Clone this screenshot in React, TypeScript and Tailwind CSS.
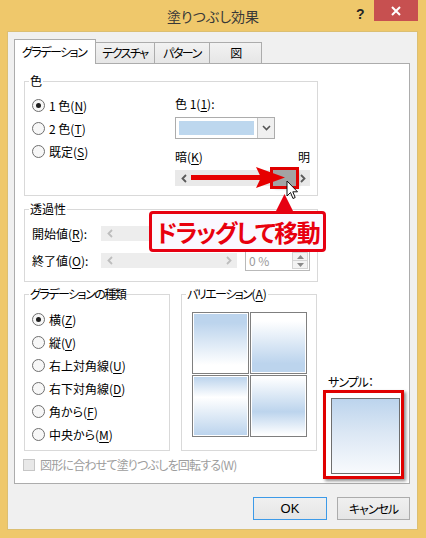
import type { ReactNode } from "react";

const Key = ({ k }: { k: string }) => (
	<>
		(<u className="underline-offset-2">{k}</u>)
	</>
);

function Radio({ checked, children }: { checked?: boolean; children: ReactNode }) {
	return (
		<div className="flex h-[23px] items-center gap-[4px]">
			<span className="flex h-[13px] w-[13px] items-center justify-center rounded-full border border-[#6f6f6f] bg-[#f7f7f7]">
				{checked ? <span className="h-[5px] w-[5px] rounded-full bg-[#1f1f1f]" /> : null}
			</span>
			<span>{children}</span>
		</div>
	);
}

function Group({ title, className, children }: { title: ReactNode; className: string; children: ReactNode }) {
	return (
		<fieldset className={`border border-[#d9d9d9] ${className}`}>
			<legend className="ml-[4px] px-[1px]">{title}</legend>
			{children}
		</fieldset>
	);
}

function Chev({ dir, color }: { dir: "left" | "right"; color: string }) {
	return (
		<svg width="6" height="9" viewBox="0 0 6 9">
			<path
				d={dir === "left" ? "M5 1 L1.5 4.5 L5 8" : "M1 1 L4.5 4.5 L1 8"}
				fill="none"
				stroke={color}
				strokeWidth="1.8"
			/>
		</svg>
	);
}

function Spin() {
	return (
		<div className="ml-[8px] flex h-[21px] w-[65px] border border-[#b9b9b9] bg-white">
			<span className="flex-1 pl-[3px] leading-[19px] text-[#9a9a9a]">0 %</span>
			<div className="my-[1px] mr-[1px] flex w-[16px] flex-col border border-[#d4d4d4] bg-[#f3f3f3]">
				<div className="flex flex-1 items-center justify-center border-b border-[#d4d4d4]">
					<svg width="7" height="4" viewBox="0 0 7 4">
						<path d="M0 4 L3.5 0 L7 4 Z" fill="#8a8a8a" />
					</svg>
				</div>
				<div className="flex flex-1 items-center justify-center">
					<svg width="7" height="4" viewBox="0 0 7 4">
						<path d="M0 0 L3.5 4 L7 0 Z" fill="#8a8a8a" />
					</svg>
				</div>
			</div>
		</div>
	);
}

const tiles = [
	"bg-[linear-gradient(to_bottom,#bcd4ed_15%,#ffffff_88%)]",
	"bg-[linear-gradient(to_bottom,#ffffff_12%,#bcd4ed_85%)]",
	"bg-[linear-gradient(to_bottom,#bcd4ed_0%,#ffffff_35%,#bcd4ed_100%)]",
	"bg-[linear-gradient(to_bottom,#ffffff_0%,#bcd4ed_60%,#ffffff_100%)]",
];

const types = [
	{ label: "横", k: "Z", checked: true },
	{ label: "縦", k: "V" },
	{ label: "右上対角線", k: "U" },
	{ label: "右下対角線", k: "D" },
	{ label: "角から", k: "F" },
	{ label: "中央から", k: "M" },
];

const tab =
	"-ml-px flex h-[21px] items-center justify-center border border-b-0 border-[#acacac] bg-[linear-gradient(to_bottom,#f2f2f2,#e6e6e6)] tracking-[-1.5px]";

export default function App() {
	return (
		<div className="relative flex h-[538px] w-[426px] flex-col overflow-hidden whitespace-nowrap bg-[#efc86b] text-[12px] leading-[16px] text-black [font-family:'Noto_Sans_CJK_JP',sans-serif] [font-feature-settings:'palt']">
			{/* title bar */}
			<div className="relative flex h-[31px] shrink-0 items-center justify-center">
				<span className="text-[14px] text-[#383838]">塗りつぶし効果</span>
				<span className="absolute left-[356px] top-[6px] text-[14px] font-bold leading-[16px] text-[#262626] [font-family:'Liberation_Sans',sans-serif]">
					?
				</span>
				<div className="absolute left-[374px] top-0 flex h-[21px] w-[44px] items-center justify-center bg-[#c75050]">
					<svg width="10" height="10" viewBox="0 0 10 10">
						<path d="M1 1 L9 9 M9 1 L1 9" stroke="#fff" strokeWidth="2" />
					</svg>
				</div>
			</div>

			{/* client */}
			<div className="mb-[8px] ml-[7px] mr-[8px] flex flex-1 flex-col border border-[#dcbf72] bg-[#f0f0f0] pl-[6px] pr-[7px] pt-[7px]">
				<div className="relative z-10 flex h-[24px] items-end">
					<div className="-mb-px flex h-[25px] w-[82px] items-center border border-b-0 border-[#acacac] bg-white pl-[7px] tracking-[-1.5px]">
						グラデーション
					</div>
					<div className={`${tab} w-[60px]`}>テクスチャ</div>
					<div className={`${tab} w-[56px]`}>パターン</div>
					<div className={`${tab} w-[53px]`}>図</div>
				</div>

				<div className="flex h-[421px] border border-[#acacac] bg-white pl-[9px] pt-[9px]">
					<div className="flex w-[294px] flex-col">
						<Group title="色" className="h-[123px]">
							<div className="flex">
								<div className="w-[150px] pl-[7px] pt-[5px]">
									<Radio checked>
										1 色<Key k="N" />
									</Radio>
									<Radio>
										2 色<Key k="T" />
									</Radio>
									<Radio>
										既定<Key k="S" />
									</Radio>
								</div>
								<div className="pt-[7px]">
									<div>
										色 1<Key k="1" />:
									</div>
									<div className="mt-[5px] flex h-[22px] w-[100px] border border-[#acacac] bg-white">
										<div className="m-[3px] w-[76px] bg-[#bdd7ee]" />
										<div className="ml-auto flex w-[17px] items-center justify-center border-l border-[#c4c4c4] bg-[#f0f0f0]">
											<svg width="9" height="6" viewBox="0 0 9 6">
												<path d="M1 1 L4.5 4.5 L8 1" fill="none" stroke="#555" strokeWidth="1.6" />
											</svg>
										</div>
									</div>
									<div className="mt-[10px] flex w-[135px] justify-between">
										<span>
											暗<Key k="K" />
										</span>
										<span>明</span>
									</div>
									<div className="relative mt-[5px] flex h-[16px] w-[135px] items-center justify-between bg-[#e9e9e9] pl-[6px] pr-[4px]">
										<Chev dir="left" color="#5a5a5a" />
										<Chev dir="right" color="#5a5a5a" />
										<div className="absolute left-[98px] top-0 h-[16px] w-[23px] bg-[#a3a3a3] shadow-[2px_2px_3px_rgba(0,0,0,0.45)] ring-[3px] ring-[#e00000]" />
									</div>
								</div>
							</div>
						</Group>

						<Group title="透過性" className="mt-[5px] h-[81px]">
							<div className="flex flex-col gap-[6px] pl-[7px] pt-[6px]">
								<div className="flex h-[21px] items-center">
									<span className="w-[69px]">
										開始値<Key k="R" />:
									</span>
									<div className="flex h-[15px] w-[136px] items-center justify-between bg-[#ededed] pl-[6px] pr-[5px]">
										<Chev dir="left" color="#bdbdbd" />
										<Chev dir="right" color="#bdbdbd" />
									</div>
									<Spin />
								</div>
								<div className="flex h-[21px] items-center">
									<span className="w-[69px]">
										終了値<Key k="O" />:
									</span>
									<div className="flex h-[15px] w-[136px] items-center justify-between bg-[#ededed] pl-[6px] pr-[5px]">
										<Chev dir="left" color="#bdbdbd" />
										<Chev dir="right" color="#bdbdbd" />
									</div>
									<Spin />
								</div>
							</div>
						</Group>

						<div className="mt-[4px] flex gap-[11px]">
							<Group
								title={<span className="tracking-[-1.5px]">グラデーションの種類</span>}
								className="h-[165px] w-[146px]"
							>
								<div className="pl-[7px] pt-[6px]">
									{types.map((t) => (
										<Radio key={t.k} checked={t.checked}>
											{t.label}
											<Key k={t.k} />
										</Radio>
									))}
								</div>
							</Group>
							<Group
								title={
									<>
										<span className="tracking-[-1.5px]">バリエーション</span>
										<Key k="A" />
									</>
								}
								className="h-[165px] w-[136px]"
							>
								<div className="grid w-max grid-cols-[57px_57px] gap-[1px] pl-[10px] pt-[10px]">
									{tiles.map((bg) => (
										<div key={bg} className="h-[62px] border border-[#7f7f7f] bg-white p-[1px]">
											<div className={`h-full w-full ${bg}`} />
										</div>
									))}
								</div>
							</Group>
						</div>

						<div className="-ml-px mt-[8px] flex h-[12px] items-center gap-[5px] text-[#9d9d9d]">
							<span className="h-[12px] w-[12px] border border-[#c6c6c6] bg-[#e8e8e8]" />
							<span className="tracking-[-0.8px]">図形に合わせて塗りつぶしを回転する(W)</span>
						</div>
					</div>

					<div className="ml-[5px] flex flex-col justify-end pb-[4px]">
						<div className="pl-[5px] tracking-[-1px]">サンプル：</div>
						<div className="h-[89px] w-[81px] border-[3px] border-[#e00000] bg-white pl-[5px] pt-[5px] shadow-[2px_2px_3px_rgba(0,0,0,0.45)]">
							<div className="h-[76px] w-[69px] border border-[#6e6e6e] bg-[linear-gradient(to_bottom,#bcd4ed_0%,#dbe7f4_45%,#f8fafd_100%)]" />
						</div>
					</div>
				</div>

				<div className="mt-[13px] flex justify-end gap-[10px]">
					<button className="h-[23px] w-[74px] border border-[#3d9ae8] bg-[linear-gradient(to_bottom,#f0f0f0,#e5e5e5)] text-[13px] [font-family:'Liberation_Sans',sans-serif]">
						OK
					</button>
					<button className="h-[23px] w-[73px] border border-[#acacac] bg-[linear-gradient(to_bottom,#f0f0f0,#e5e5e5)] tracking-[-1px]">
						キャンセル
					</button>
				</div>
			</div>

			{/* annotation overlays */}
			<svg className="absolute left-[189px] top-[166px]" width="98" height="24" viewBox="0 0 98 24">
				<rect x="2" y="9" width="70" height="5" fill="#e60000" />
				<path d="M67 1 L96 11.5 L67 22 L72 11.5 Z" fill="#e60000" />
			</svg>
			<svg className="absolute left-[286px] top-[180px]" width="13" height="21" viewBox="0 0 13 21">
				<path
					d="M1 1 L1 16 L4.5 12.5 L7 18.5 L9.2 17.5 L6.8 11.8 L11.5 11.8 Z"
					fill="#fff"
					stroke="#111"
					strokeWidth="1"
					strokeLinejoin="round"
				/>
			</svg>
			<svg className="absolute left-[275px] top-[194px]" width="19" height="19" viewBox="0 0 19 19">
				<path d="M9.5 0 L0 19 L19 19 Z" fill="#e60012" />
			</svg>
			<div className="absolute left-[149px] top-[211px] flex h-[41px] w-[177px] items-center rounded-[4px] border-[3px] border-[#e60012] bg-[#faf8ff] pl-[4px] text-[24px] font-bold leading-[28px] tracking-[-1.5px] text-[#e8000e]">
				ドラッグして移動
			</div>
		</div>
	);
}
